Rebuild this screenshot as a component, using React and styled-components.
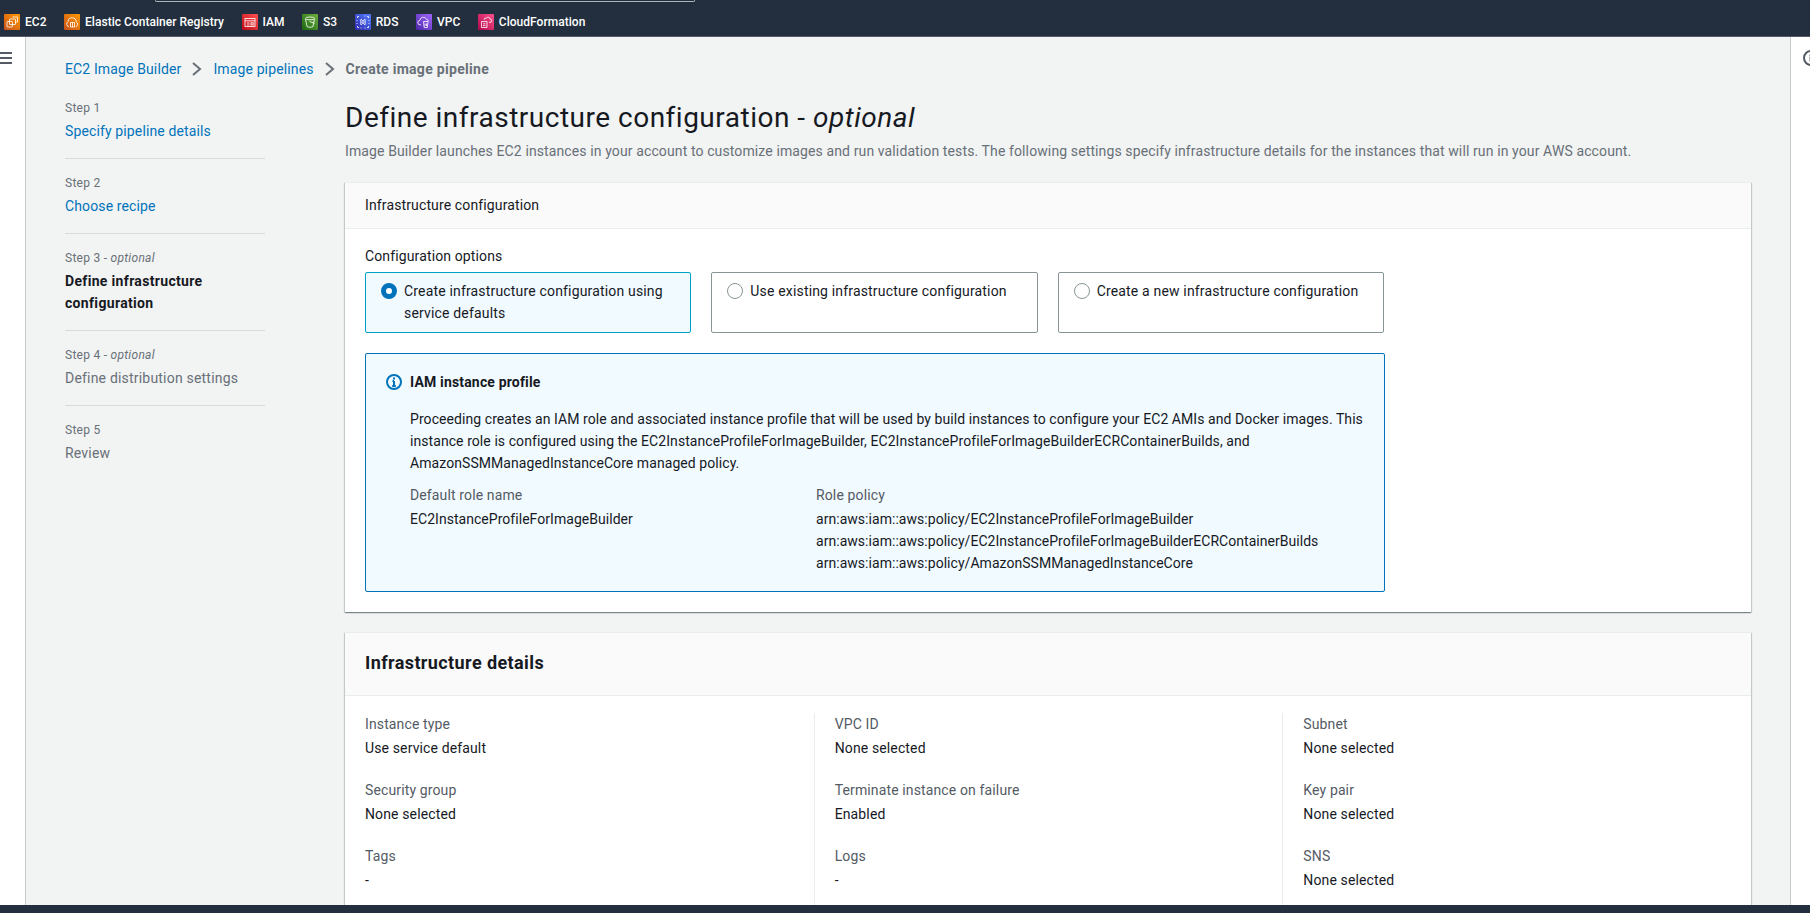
import React from 'react';
import styled, { createGlobalStyle } from 'styled-components';

const FONT = '"Roboto", "Noto Sans", "Liberation Sans", sans-serif';

const Global = createGlobalStyle`
  html, body { margin: 0; padding: 0; height: 100%; overflow: hidden; }
  body { font-family: ${FONT}; font-size: 14px; line-height: 22px; letter-spacing: .13px; color: #16191f; background: #f2f3f3; }
  * { box-sizing: border-box; }
`;

const Page = styled.div`display:flex;flex-direction:column;height:100vh;overflow:hidden;`;
const Header = styled.header`flex:none;height:37px;background:#232f3e;border-bottom:1px solid #545b64;`;
const SearchEdge = styled.div`width:540px;height:2px;margin-left:155px;border:1px solid #aab7b8;border-top:0;border-radius:0 0 2px 2px;`;
const Shortcuts = styled.nav`display:flex;align-items:center;height:30px;margin-top:5px;padding-left:4px;gap:17.5px;`;
const Shortcut = styled.a`display:flex;align-items:center;gap:5px;color:#fff;font-size:12px;font-weight:500;line-height:16px;letter-spacing:.03px;white-space:nowrap;`;
const Tile = styled.span`display:block;flex:none;width:16px;height:16px;border-radius:1px;background:linear-gradient(45deg,${p=>p.$from},${p=>p.$to});`;
const TileSvg = styled.svg`display:block;width:16px;height:16px;fill:none;stroke:#fff;stroke-width:.9;stroke-opacity:.9;`;

const Body = styled.div`flex:1;min-height:0;display:flex;overflow:hidden;`;
const LeftRail = styled.aside`flex:none;width:26px;background:#fff;border-right:1px solid #c5cccc;padding-top:15px;`;
const MenuIcon = styled.svg`display:block;width:12px;height:12px;`;
const RightRail = styled.aside`flex:none;width:20px;background:#fff;border-left:1px solid #c5cccc;overflow:hidden;padding:13px 0 0 12px;`;
const RailIcon = styled.svg`display:block;width:16px;height:16px;flex:none;overflow:visible;`;
const Content = styled.div`flex:1;min-width:0;padding:21px 39px 0;overflow:hidden;`;

const Crumbs = styled.div`display:flex;align-items:center;height:22px;`;
const CrumbLink = styled.a`color:#0073bb;font-weight:400;`;
const CrumbCurrent = styled.span`color:#687078;font-weight:700;letter-spacing:.3px;`;
const Chevron = styled.svg`display:block;width:12px;height:16px;margin:0 10px;fill:none;stroke:#687078;stroke-width:2;`;

const Columns = styled.div`display:flex;gap:80px;margin-top:20px;`;
const Steps = styled.ol`flex:none;width:200px;list-style:none;margin:0;padding:0;`;
const Step = styled.li`padding:${p=>p.$first?'0':'16px'} 0 16px;border-bottom:${p=>p.$last?'0':'1px solid #d5dbdb'};`;
const StepNo = styled.div`font-size:12px;line-height:16px;letter-spacing:.27px;color:#687078;margin-bottom:4px;em{font-style:italic;}`;
const StepLink = styled.a`display:block;color:#0073bb;`;
const StepCurrent = styled.div`font-weight:700;color:#16191f;letter-spacing:.33px;`;
const StepFuture = styled.div`color:#687078;letter-spacing:.2px;`;

const Main = styled.main`flex:1;min-width:0;`;
const Title = styled.h1`margin:0;font-size:28px;line-height:36px;font-weight:400;letter-spacing:.5px;color:#16191f;`;
const Intro = styled.p`margin:4px 0 20px;color:#687078;white-space:nowrap;letter-spacing:.115px;`;

const Card = styled.section`background:#fff;margin-bottom:20px;box-shadow:0 1px 1px 0 rgba(0,28,36,.3),1px 1px 1px 0 rgba(0,28,36,.15),-1px 1px 1px 0 rgba(0,28,36,.15);border-top:1px solid #eaeded;`;
const CardHeader = styled.div`background:#fafafa;border-bottom:1px solid #eaeded;padding:${p=>p.$large?'18px 20px 20px':'11px 20px 12px'};`;
const CardTitle = styled.h2`margin:0;font-size:18px;line-height:24px;font-weight:700;letter-spacing:.4px;`;
const CardBody = styled.div`padding:16px 20px 20px;`;
const FieldLabel = styled.div`margin-bottom:5px;`;
const Options = styled.div`display:grid;grid-template-columns:repeat(3,1fr);gap:20px;width:1019px;`;
const Option = styled.label`display:flex;gap:7px;height:61px;padding:7px 14px 7px 15px;border:1px solid ${p=>p.$on?'#00a1c9':'#879596'};background:${p=>p.$on?'#f1faff':'#fff'};border-radius:2px;letter-spacing:.17px;`;
const Radio = styled.span`flex:none;width:16px;height:16px;margin-top:3px;border-radius:50%;background:#fff;border:${p=>p.$on?'5px solid #0073bb':'1px solid #879596'};`;
const Alert = styled.div`width:1020px;margin-top:20px;padding:17px 17px 17px 20px;border:1px solid #0073bb;border-radius:2px;background:#f1faff;`;
const AlertHead = styled.div`display:flex;align-items:center;gap:8px;font-weight:700;letter-spacing:.17px;`;
const AlertText = styled.p`margin:15px 0 10px 24px;white-space:nowrap;letter-spacing:.07px;`;
const RoleGrid = styled.div`display:grid;grid-template-columns:406px 1fr;margin-left:24px;letter-spacing:.04px;`;
const RoleLabel = styled.div`color:#545b64;margin-bottom:2px;letter-spacing:.13px;`;
const Mono = styled.div`white-space:nowrap;`;

const Details = styled.div`display:grid;grid-template-columns:repeat(3,1fr);padding:17px 0 0;`;
const DetailCol = styled.div`padding:0 20px;min-height:230px;border-left:${p=>p.$first?'0':'1px solid #eaeded'};`;
const Detail = styled.div`margin-bottom:20px;`;
const DetailLabel = styled.div`color:#545b64;margin-bottom:2px;`;
const Footer = styled.footer`flex:none;height:8px;background:#232f3e;`;

const shortcuts = [
  { label:'EC2', from:'#c8511b', to:'#ff9900', icon:<><path d="M8.5 3h5v5h-2.5"/><rect x="5.5" y="5" width="6" height="5.5" rx=".5"/><rect x="3" y="7.5" width="5.5" height="5.5" rx=".5"/></> },
  { label:'Elastic Container Registry', from:'#c8511b', to:'#ff9900', icon:<><path d="M5 12.8a2.8 2.8 0 0 1-.9-5.2 3.4 3.4 0 0 1 4-3.7 3.5 3.5 0 0 1 4 4 2.6 2.6 0 0 1-.5 4.9"/><path d="M6.5 8.5h4v4.5h-4zM8.5 8.5V13"/></> },
  { label:'IAM', from:'#bd0816', to:'#ff5252', icon:<><rect x="3" y="4.5" width="10" height="8"/><path d="M3 6.8h10M5 9h2.5M5 11h2.5"/><rect x="9" y="8.8" width="2.2" height="2.2"/></> },
  { label:'S3', from:'#1b660f', to:'#6cae3e', icon:<><path d="M3.5 4.8l1.5 7.7c.9.9 5.1.9 6 0l1.5-7.7"/><ellipse cx="8" cy="4.4" rx="4.5" ry="1.4"/><path d="M7.5 7.5l5 1.8"/></> },
  { label:'RDS', from:'#2e27ad', to:'#527fff', icon:<><path d="M7 5.5H5.8v5H7M9 5.5h1.2v5H9"/><ellipse cx="8" cy="8" rx="1" ry="1.8"/><path d="M2.5 2.5h1.5M2.5 2.5V4M13.5 2.5H12M13.5 2.5V4M2.5 13.5h1.5M2.5 13.5V12M13.5 13.5H12M13.5 13.5V12"/><path d="M1.5 6.5h1M1.5 9.5h1M13.5 6.5h1M13.5 9.5h1M6.5 2h0M9.5 2h1M5.5 14h1M9.5 14h1"/></> },
  { label:'VPC', from:'#4d27a8', to:'#a166ff', icon:<><path d="M5 10.8H4.2a2.2 2.2 0 0 1-.3-4.4 3.4 3.4 0 0 1 6.5-1.2 2.6 2.6 0 0 1 2.2 2"/><path d="M7.5 7.5h4.5l-.7 6H8.2z"/><path d="M9 9.5v2.5M10.5 9.5v2.5"/></> },
  { label:'CloudFormation', from:'#b0084d', to:'#ff4f8b', icon:<><path d="M3.5 7.5H9v6H3.5zM5 9.8h2.5M5 11.6h2.5"/><path d="M6 5.8a1.8 1.8 0 0 1 2.2-1.6 2.2 2.2 0 0 1 4 .9 1.6 1.6 0 0 1-.2 3.2h-1"/></> },
];

const Info = () => (
  <RailIcon viewBox="0 0 16 16" fill="none" stroke="#0073bb" strokeWidth="2">
    <circle cx="8" cy="8" r="7"/>
    <path d="M8 7v5M6.2 12h3.6M6.5 7H8M8 3.6v1.8"/>
  </RailIcon>
);

const Sep = () => <Chevron viewBox="0 0 12 16"><path d="M2 2l7 6-7 6"/></Chevron>;

const details = [
  [['Instance type','Use service default'],['Security group','None selected'],['Tags','-']],
  [['VPC ID','None selected'],['Terminate instance on failure','Enabled'],['Logs','-']],
  [['Subnet','None selected'],['Key pair','None selected'],['SNS','None selected']],
];

export default function App() {
  return (
    <Page>
      <Global />
      <Header>
        <SearchEdge />
        <Shortcuts>
          {shortcuts.map(s => (
            <Shortcut key={s.label}>
              <Tile $from={s.from} $to={s.to}><TileSvg viewBox="0 0 16 16">{s.icon}</TileSvg></Tile>
              {s.label}
            </Shortcut>
          ))}
        </Shortcuts>
      </Header>
      <Body>
        <LeftRail>
          <MenuIcon viewBox="0 0 12 12" fill="none" stroke="#545b64" strokeWidth="2"><path d="M0 1h12M0 6h12M0 11h12"/></MenuIcon>
        </LeftRail>
        <Content>
          <Crumbs>
            <CrumbLink>EC2 Image Builder</CrumbLink><Sep />
            <CrumbLink>Image pipelines</CrumbLink><Sep />
            <CrumbCurrent>Create image pipeline</CrumbCurrent>
          </Crumbs>
          <Columns>
            <Steps>
              <Step $first><StepNo>Step 1</StepNo><StepLink>Specify pipeline details</StepLink></Step>
              <Step><StepNo>Step 2</StepNo><StepLink>Choose recipe</StepLink></Step>
              <Step><StepNo>Step 3 - <em>optional</em></StepNo><StepCurrent>Define infrastructure<br/>configuration</StepCurrent></Step>
              <Step><StepNo>Step 4 - <em>optional</em></StepNo><StepFuture>Define distribution settings</StepFuture></Step>
              <Step $last><StepNo>Step 5</StepNo><StepFuture>Review</StepFuture></Step>
            </Steps>
            <Main>
              <Title>Define infrastructure configuration - <em>optional</em></Title>
              <Intro>Image Builder launches EC2 instances in your account to customize images and run validation tests. The following settings specify infrastructure details for the instances that will run in your AWS account.</Intro>
              <Card>
                <CardHeader>Infrastructure configuration</CardHeader>
                <CardBody>
                  <FieldLabel>Configuration options</FieldLabel>
                  <Options>
                    <Option $on><Radio $on /><span>Create infrastructure configuration using<br/>service defaults</span></Option>
                    <Option><Radio /><span>Use existing infrastructure configuration</span></Option>
                    <Option><Radio /><span>Create a new infrastructure configuration</span></Option>
                  </Options>
                  <Alert>
                    <AlertHead><Info />IAM instance profile</AlertHead>
                    <AlertText>
                      Proceeding creates an IAM role and associated instance profile that will be used by build instances to configure your EC2 AMIs and Docker images. This<br/>
                      instance role is configured using the EC2InstanceProfileForImageBuilder, EC2InstanceProfileForImageBuilderECRContainerBuilds, and<br/>
                      AmazonSSMManagedInstanceCore managed policy.
                    </AlertText>
                    <RoleGrid>
                      <div><RoleLabel>Default role name</RoleLabel><Mono>EC2InstanceProfileForImageBuilder</Mono></div>
                      <div>
                        <RoleLabel>Role policy</RoleLabel>
                        <Mono>arn:aws:iam::aws:policy/EC2InstanceProfileForImageBuilder</Mono>
                        <Mono>arn:aws:iam::aws:policy/EC2InstanceProfileForImageBuilderECRContainerBuilds</Mono>
                        <Mono>arn:aws:iam::aws:policy/AmazonSSMManagedInstanceCore</Mono>
                      </div>
                    </RoleGrid>
                  </Alert>
                </CardBody>
              </Card>
              <Card>
                <CardHeader $large><CardTitle>Infrastructure details</CardTitle></CardHeader>
                <Details>
                  {details.map((col,i) => (
                    <DetailCol key={i} $first={i===0}>
                      {col.map(([k,v]) => <Detail key={k}><DetailLabel>{k}</DetailLabel><div>{v}</div></Detail>)}
                    </DetailCol>
                  ))}
                </Details>
              </Card>
            </Main>
          </Columns>
        </Content>
        <RightRail>
          <RailIcon viewBox="0 0 16 16" fill="none" stroke="#545b64" strokeWidth="2"><circle cx="8" cy="8" r="7"/><path d="M6.5 5.5h1M6.5 8h1M6.5 10.5h1"/></RailIcon>
        </RightRail>
      </Body>
      <Footer />
    </Page>
  );
}
